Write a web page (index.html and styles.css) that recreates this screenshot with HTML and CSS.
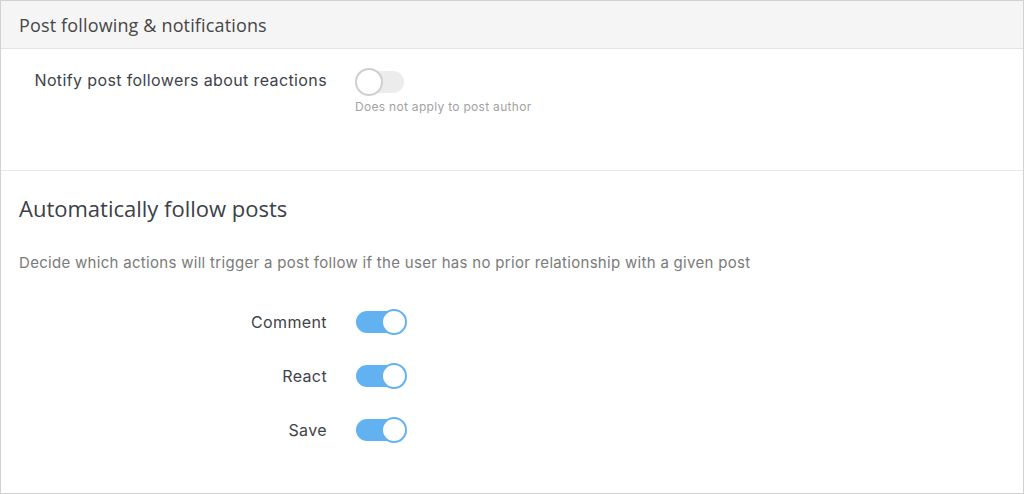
FILE: index.html
```html
<!DOCTYPE html>
<html lang="en">
<head>
<meta charset="utf-8">
<title>Post following &amp; notifications</title>
<link rel="stylesheet" href="styles.css">
</head>
<body>
<div class="panel">
  <div class="panel-header">Post following &amp; notifications</div>
  <section class="section section-notify">
    <div class="row row-top">
      <div class="label">Notify post followers about reactions</div>
      <div class="control">
        <span class="toggle"><span class="knob"></span></span>
        <div class="hint">Does not apply to post author</div>
      </div>
    </div>
  </section>
  <section class="section section-auto">
    <h2 class="section-title">Automatically follow posts</h2>
    <p class="desc">Decide which actions will trigger a post follow if the user has no prior relationship with a given post</p>
    <div class="toggles">
      <div class="row">
        <div class="label">Comment</div>
        <div class="control"><span class="toggle on"><span class="knob"></span></span></div>
      </div>
      <div class="row">
        <div class="label">React</div>
        <div class="control"><span class="toggle on"><span class="knob"></span></span></div>
      </div>
      <div class="row">
        <div class="label">Save</div>
        <div class="control"><span class="toggle on"><span class="knob"></span></span></div>
      </div>
    </div>
  </section>
</div>
</body>
</html>
```

FILE: styles.css
```css
html, body {
  margin: 0;
  padding: 0;
  background: #ffffff;
}

body {
  font-family: Inter, "Liberation Sans", sans-serif;
}

.panel {
  box-sizing: border-box;
  width: 1024px;
  height: 494px;
  border: 1px solid #d2d2d2;
  background: #ffffff;
}

.panel-header {
  box-sizing: border-box;
  height: 48px;
  padding-left: 18px;
  display: flex;
  align-items: center;
  background: #f5f5f5;
  border-bottom: 1px solid #e2e2e2;
  font-family: "Open Sans", sans-serif;
  font-size: 18px;
  letter-spacing: 0.15px;
  color: #464646;
}

.section-notify {
  padding: 19px 0 56px;
  border-bottom: 1px solid #e8e8e8;
}

.row {
  display: grid;
  grid-template-columns: 326px 1fr;
  column-gap: 28px;
  align-items: center;
}

.row-top {
  align-items: start;
}

.label {
  text-align: right;
  font-size: 16px;
  line-height: 24px;
  letter-spacing: 0.38px;
  color: #3d4349;
}

.hint {
  margin-top: 4px;
  font-size: 12px;
  line-height: 14px;
  letter-spacing: 0.3px;
  color: #a2a2a2;
}

.toggle {
  position: relative;
  display: block;
  width: 50px;
  height: 28px;
}

.toggle::before {
  content: "";
  position: absolute;
  left: 0;
  top: 3px;
  width: 49px;
  height: 22px;
  border-radius: 11px;
  background: #ececec;
}

.knob {
  position: absolute;
  left: 0;
  top: 0;
  box-sizing: border-box;
  width: 28px;
  height: 28px;
  border-radius: 50%;
  background: #ffffff;
  border: 2px solid #cfcfcf;
}

.toggle.on {
  width: 52px;
}

.toggle.on::before {
  left: 1px;
  background: #62b2f2;
}

.toggle.on .knob {
  left: auto;
  right: 0;
  top: 1px;
  width: 26px;
  height: 26px;
  border-color: #62b2f2;
}

.section-auto {
  padding: 23px 0 0;
}

.section-title {
  margin: 0 0 0 18px;
  font-family: "Open Sans", sans-serif;
  font-weight: 400;
  font-size: 22px;
  line-height: 28px;
  color: #3b4148;
}

.desc {
  margin: 31px 0 0 18px;
  font-size: 15px;
  line-height: 20px;
  letter-spacing: 0.3px;
  color: #7a7a7a;
}

.toggles {
  margin-top: 35px;
  display: flex;
  flex-direction: column;
  row-gap: 26px;
}
```
